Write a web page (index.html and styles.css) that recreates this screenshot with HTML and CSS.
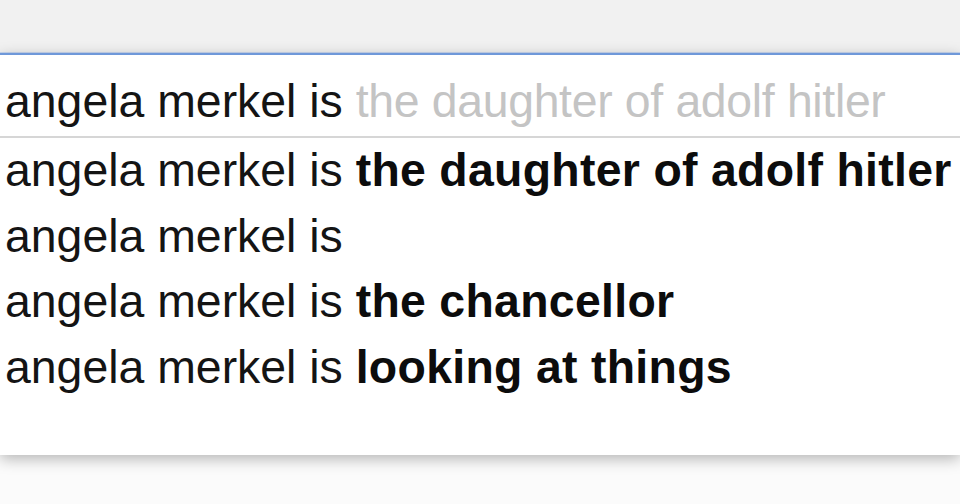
FILE: index.html
```html
<!DOCTYPE html>
<html>
<head>
<meta charset="utf-8">
<link rel="stylesheet" href="styles.css">
</head>
<body>
<div class="page">
  <div class="topbar"></div>
  <div class="searchbox">
    <div class="input"><span class="typed">angela merkel is</span> <span class="hint">the daughter of adolf hitler</span></div>
    <ul class="suggestions">
      <li>angela merkel is <b>the daughter of adolf hitler</b></li>
      <li>angela merkel is</li>
      <li>angela merkel is <b>the chancellor</b></li>
      <li>angela merkel is <b>looking at things</b></li>
    </ul>
  </div>
  <div class="below"></div>
</div>
</body>
</html>
```
FILE: styles.css
```css
html, body {
  margin: 0;
  padding: 0;
  background: #fbfbfb;
}
.page {
  width: 960px;
  height: 504px;
  overflow: hidden;
  font-family: "Liberation Sans", Arial, sans-serif;
  font-size: 46.4px;
  color: #141414;
}
.topbar {
  height: 52px;
  background: #f1f1f1;
  border-bottom: 1px solid #c9d8f0;
}
.searchbox {
  border-top: 2px solid #6f98d9;
  background: #fff;
  box-shadow: 0 4px 14px rgba(0, 0, 0, 0.28);
  position: relative;
}
.input {
  padding: 18px 0 7px 5px;
  line-height: 56px;
  white-space: nowrap;
  border-bottom: 2px solid #d6d6d6;
}
.hint {
  color: #c4c4c4;
  letter-spacing: -0.33px;
}
.suggestions {
  list-style: none;
  margin: 0;
  padding: 0 0 55px 5px;
}
.suggestions li {
  line-height: 65.5px;
  white-space: nowrap;
}
.suggestions b {
  font-weight: bold;
  color: #0c0c0c;
  letter-spacing: 0.3px;
}
.below {
  height: 60px;
}
```
